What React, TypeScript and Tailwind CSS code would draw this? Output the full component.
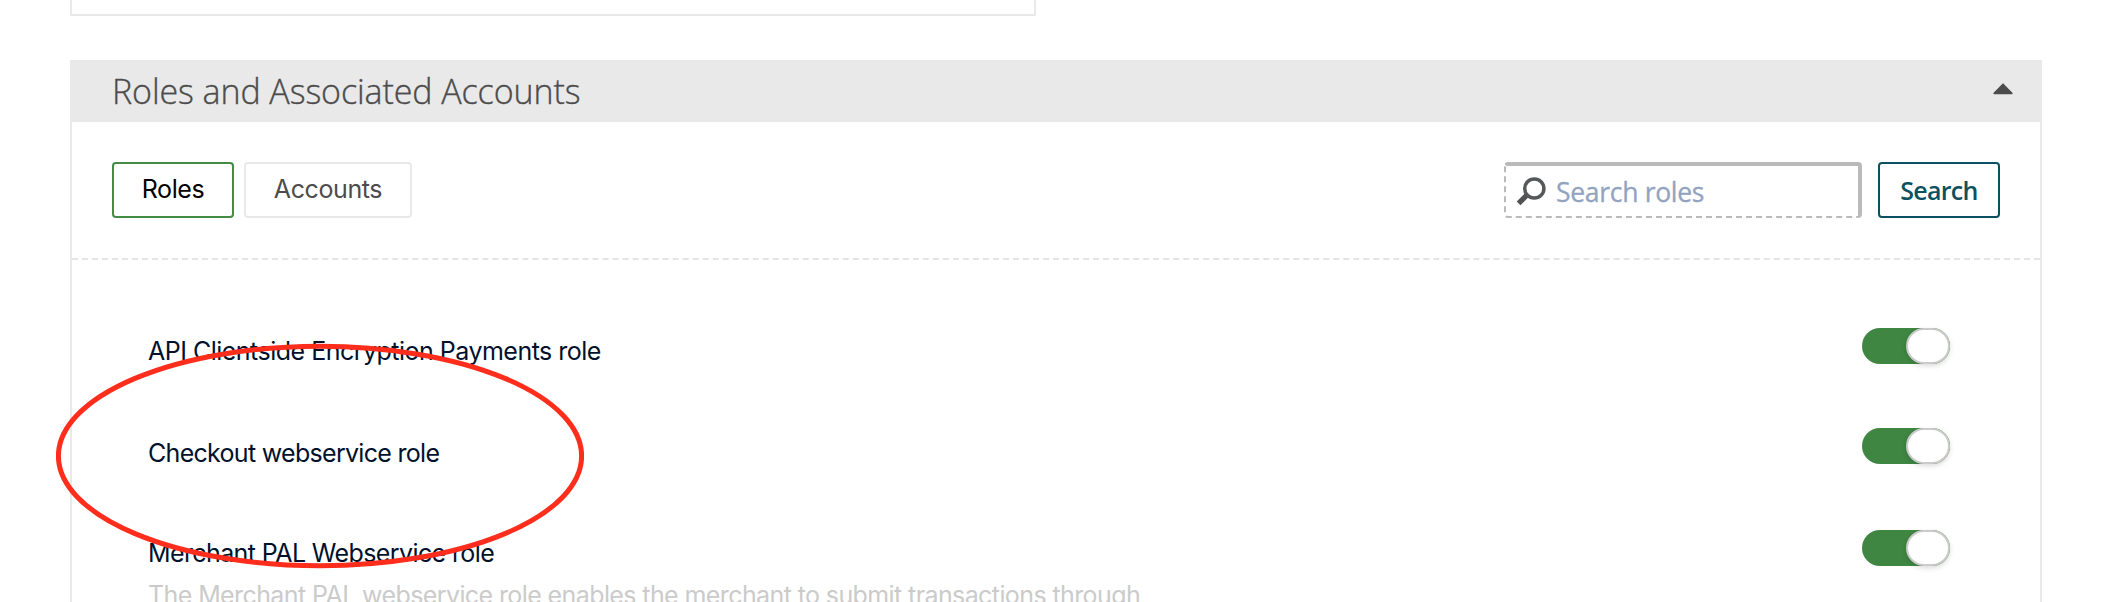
import type { ReactNode } from "react";

type Role = {
  name: string;
  rowClass: string;
  labelClass: string;
  description?: string;
};

const roles: Role[] = [
  {
    name: "API Clientside Encryption Payments role",
    rowClass: "h-[100px]",
    labelClass: "pt-[5px] tracking-[-0.51px]",
  },
  {
    name: "Checkout webservice role",
    rowClass: "h-[102px]",
    labelClass: "pt-[7px] tracking-[-0.7px]",
  },
  {
    name: "Merchant PAL Webservice role",
    rowClass: "h-[102px]",
    labelClass: "pt-[5px] tracking-[-0.61px]",
    description:
      "The Merchant PAL webservice role enables the merchant to submit transactions through",
  },
];

function Toggle() {
  return (
    <button
      type="button"
      role="switch"
      aria-checked="true"
      className="flex h-9 w-[88px] shrink-0 justify-end rounded-full bg-[#3f8642]"
    >
      <span className="h-9 w-11 rounded-full border-2 border-[#cbcbcb] bg-white shadow-[0_2px_5px_rgba(0,0,0,0.14)]" />
    </button>
  );
}

function TabButton({ className, children }: { className: string; children: ReactNode }) {
  return (
    <button
      type="button"
      className={`flex h-14 items-center justify-center rounded-[4px] border-2 font-[Inter,sans-serif] text-[25px] ${className}`}
    >
      {children}
    </button>
  );
}

function SearchIcon() {
  return (
    <svg width="32" height="32" viewBox="0 0 32 32" fill="none" className="mt-[2px] shrink-0">
      <path d="M12.6 19.4 4.6 27.4" stroke="#505153" strokeWidth="5.2" />
      <circle cx="20.3" cy="12.5" r="9.6" stroke="#56585a" strokeWidth="3.5" />
    </svg>
  );
}

export default function App() {
  return (
    <div className="relative h-[602px] w-[2120px] overflow-hidden bg-white">
      <div className="ml-[70px] h-4 w-[966px] border-x-2 border-b-2 border-[#e9e9e9]" />

      <section className="mt-11 ml-[70px] h-[600px] w-[1972px] border-x-2 border-[#e9e9e9]">
        <header className="-mx-0.5 flex h-[62px] items-center justify-between bg-[#e9e9e9] pr-[29px] pl-[42px]">
          <h2 className="font-['Open_Sans',sans-serif] text-[34px] leading-[62px] font-light tracking-[-0.1px] text-[#4c4c4c] [-webkit-text-stroke:0.35px_#4c4c4c]">
            Roles and Associated Accounts
          </h2>
          <svg width="20" height="12" viewBox="0 0 20 12" className="mb-1">
            <path
              d="M10 1.2 18.8 10.4H1.2Z"
              fill="#4c4c4c"
              stroke="#4c4c4c"
              strokeWidth="1.6"
              strokeLinejoin="round"
            />
          </svg>
        </header>

        <div className="flex h-[138px] items-start justify-between border-b-2 border-dashed border-[#e4e4e4] px-10 pt-10">
          <div className="flex gap-[10px]">
            <TabButton className="w-[122px] border-[#428c46] tracking-[-0.4px] text-black">
              Roles
            </TabButton>
            <TabButton className="w-[168px] border-[#e9e9e9] tracking-[-0.4px] text-[#4c4c4c]">
              Accounts
            </TabButton>
          </div>
          <div className="flex gap-4">
            <div className="flex h-14 w-[358px] items-center rounded-[4px] border-t-4 border-r-4 border-b-2 border-l-2 border-[#bababa] pl-2 [border-bottom-style:dashed] [border-left-style:dashed]">
              <SearchIcon />
              <input
                type="text"
                placeholder="Search roles"
                className="ml-[10px] h-[50px] w-[280px] bg-transparent pt-px font-['Open_Sans',sans-serif] text-[26.5px] tracking-[-0.3px] outline-none [-webkit-text-stroke:0.3px_#92a3bf] placeholder:text-[#92a3bf]"
              />
            </div>
            <button
              type="button"
              className="flex h-14 w-[122px] items-center justify-center rounded-[4px] border-2 border-[#0b5162] pt-[2px] font-['Open_Sans',sans-serif] text-[25px] font-semibold tracking-[-0.7px] text-[#0b5162]"
            >
              Search
            </button>
          </div>
        </div>

        <ul className="pt-[68px] pr-[90px] pl-[76px]">
          {roles.map((role) => (
            <li key={role.name} className={`flex items-start justify-between ${role.rowClass}`}>
              <div className="font-[Inter,sans-serif] text-[25px] leading-9 whitespace-nowrap">
                <p className={`text-[#00112c] ${role.labelClass}`}>{role.name}</p>
                {role.description && (
                  <p className="mt-[6px] tracking-[-0.6px] text-[#cbcbcb]">{role.description}</p>
                )}
              </div>
              <Toggle />
            </li>
          ))}
        </ul>
      </section>

      <svg
        width="528"
        height="226"
        viewBox="0 0 528 226"
        fill="none"
        className="pointer-events-none absolute top-[343px] left-[56px]"
      >
        <ellipse cx="264" cy="113" rx="261.6" ry="109.8" stroke="#ff2d1c" strokeWidth="5" />
      </svg>
    </div>
  );
}
